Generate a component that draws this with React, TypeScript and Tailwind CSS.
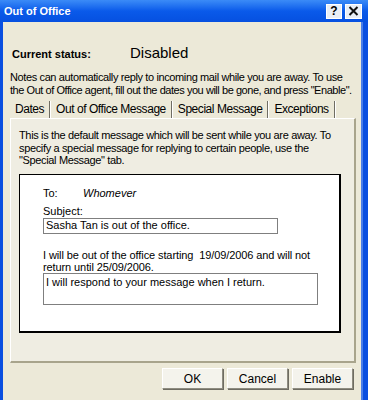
import React from "react";

const font = { fontFamily: '"Liberation Sans", Arial, sans-serif' };

function XpButton({ label }: { label: string }) {
  return (
    <button className="w-[61px] h-[21px] bg-[#F4F3EC] border border-t-white border-l-white border-r-[#8E8C80] border-b-[#8E8C80] shadow-[1px_1px_0_#6E6C62] text-[12px] text-black leading-none">
      {label}
    </button>
  );
}

function Tab({ label }: { label: string }) {
  return (
    <div className="flex items-center shrink-0">
      <span className="px-[5px] text-[12px] tracking-[-0.45px] text-black leading-none whitespace-nowrap">{label}</span>
      <span className="w-px h-[17px] bg-[#6F6D63] border-r border-white box-content" />
    </div>
  );
}

export default function App() {
  return (
    <div className="w-[368px] h-[400px] overflow-hidden bg-[#0A4FE0] flex flex-col" style={font}>
      {/* title bar */}
      <div className="h-[22px] shrink-0 flex items-center justify-between pl-[4px] pr-[6px] bg-gradient-to-b from-[#3B8BF7] via-[#0A5AEA] to-[#0650E0]">
        <span className="text-white font-bold text-[11px]">Out of Office</span>
        <div className="flex items-center gap-[3px]">
          <div className="w-[16px] h-[15px] bg-[#E9EEF6] border border-white flex items-center justify-center text-[12px] font-bold text-black leading-none">?</div>
          <div className="w-[17px] h-[15px] bg-[#E9EEF6] border border-white flex items-center justify-center">
            <svg width="11" height="10" viewBox="0 0 11 10">
              <path d="M1.5 1 L9.5 9 M9.5 1 L1.5 9" stroke="#111" strokeWidth="2" />
            </svg>
          </div>
        </div>
      </div>

      {/* body */}
      <div className="flex-1 ml-[3px] mr-[5px] bg-[#ECE9D8] border-r-2 border-[#4A7EE8] flex flex-col">
        <div className="flex items-baseline pl-[9px] pt-[20px] h-[42px] shrink-0">
          <span className="w-[118px] text-[11px] font-bold text-black">Current status:</span>
          <span className="text-[15px] text-black">Disabled</span>
        </div>

        <p className="pl-[7px] mt-[7px] text-[11px] leading-[13px] text-black tracking-[-0.38px] whitespace-nowrap">
          Notes can automatically reply to incoming mail while you are away. To use
          <br />
          <span className="tracking-[-0.45px]">the Out of Office agent, fill out the dates you will be gone, and press "Enable".</span>
        </p>

        <div className="flex items-center h-[18px] mt-[3px] pl-[7px] shrink-0">
          <Tab label="Dates" />
          <Tab label="Out of Office Message" />
          <Tab label="Special Message" />
          <Tab label="Exceptions" />
        </div>

        <div className="ml-[7px] w-[346px] h-[245px] shrink-0 bg-[#EFEDE2] border-l border-t border-white border-r-2 border-b-2 border-r-[#A8A48C] border-b-[#A8A48C] flex flex-col">
          <p className="pl-[8px] pt-[10px] text-[11px] leading-[12.5px] text-black tracking-[-0.35px] whitespace-nowrap">
            This is the default message which will be sent while you are away. To
            <br />
            specify a special message for replying to certain people, use the
            <br />
            "Special Message" tab.
          </p>

          <div className="ml-[8px] mt-[7px] w-[322px] h-[159px] bg-white border border-black border-r-2 border-b-2 pl-[23px] pt-[12px] flex flex-col">
            <div className="flex text-[11px] leading-[13px] text-black">
              <span className="w-[40px]">To:</span>
              <span className="italic">Whomever</span>
            </div>
            <div className="mt-[5px] text-[11px] leading-[13px] text-black">Subject:</div>
            <div className="w-[235px] h-[16px] border border-[#7F7F7F] flex items-center pl-[2px] text-[11px] text-black whitespace-nowrap">
              Sasha Tan is out of the office.
            </div>
            <p className="mt-[15px] text-[11px] leading-[12px] text-black tracking-[-0.1px] whitespace-nowrap">
              I will be out of the office starting&nbsp; 19/09/2006 and will not
              <br />
              return until 25/09/2006.
            </p>
            <div className="mt-[0px] w-[275px] h-[32px] border border-[#7F7F7F] pl-[2px] pt-[2px] text-[11px] leading-[13px] text-black">
              I will respond to your message when I return.
            </div>
          </div>
        </div>

        <div className="flex justify-end gap-[4px] pr-[8px] mt-[5px] shrink-0">
          <XpButton label="OK" />
          <XpButton label="Cancel" />
          <XpButton label="Enable" />
        </div>
      </div>
    </div>
  );
}
